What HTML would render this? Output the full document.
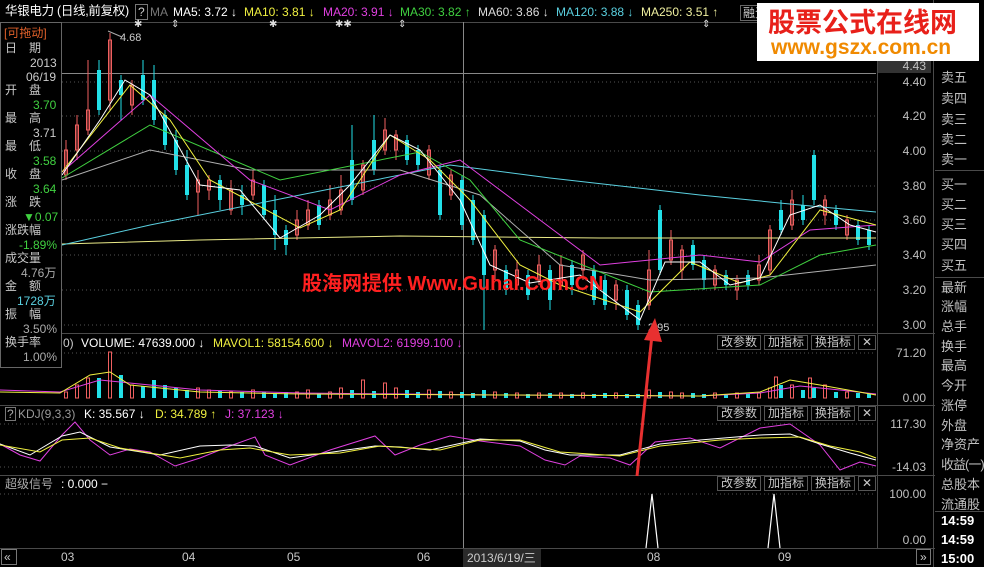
<!DOCTYPE html>
<html><head><meta charset="utf-8"><style>
*{margin:0;padding:0;box-sizing:border-box}
body{width:984px;height:567px;background:#000;overflow:hidden;position:relative;font-family:"Liberation Sans","Noto Sans CJK SC",sans-serif;font-size:12px;color:#c8c8c8}
.a{position:absolute;white-space:nowrap;line-height:14px}
.btn{position:absolute;border:1px solid #555;color:#c8c8c8;font-size:12px;line-height:13px;padding:0 3px;height:15px}
.rp{position:absolute;left:941px;color:#c0c0c0;font-size:13px;line-height:15px;white-space:nowrap}
.ax{position:absolute;right:58px;color:#c0c0c0;font-size:12px;line-height:12px;text-align:right}
</style></head><body>
<svg width="984" height="567" style="position:absolute;left:0;top:0">
<g stroke="#555" stroke-dasharray="1,3" stroke-width="1">
<line x1="62" y1="82" x2="876" y2="82"/><line x1="62" y1="116" x2="876" y2="116"/><line x1="62" y1="151" x2="876" y2="151"/><line x1="62" y1="186" x2="876" y2="186"/><line x1="62" y1="220" x2="876" y2="220"/><line x1="62" y1="255" x2="876" y2="255"/><line x1="62" y1="290" x2="876" y2="290"/><line x1="0" y1="325" x2="876" y2="325"/>
<line x1="0" y1="353" x2="876" y2="353"/><line x1="0" y1="424" x2="876" y2="424"/><line x1="0" y1="467" x2="876" y2="467"/><line x1="0" y1="494" x2="876" y2="494"/>
</g>
<g stroke="#4a4a4a" stroke-width="1">
<line x1="0" y1="22.5" x2="935" y2="22.5"/>
<line x1="0" y1="333.5" x2="935" y2="333.5"/><line x1="0" y1="405.5" x2="935" y2="405.5"/><line x1="0" y1="475.5" x2="935" y2="475.5"/><line x1="0" y1="548.5" x2="935" y2="548.5"/>
<line x1="877.5" y1="22" x2="877.5" y2="548"/><line x1="933.5" y1="0" x2="933.5" y2="567"/>
<line x1="935" y1="170.5" x2="984" y2="170.5"/><line x1="935" y1="277.5" x2="984" y2="277.5"/><line x1="935" y1="511.5" x2="984" y2="511.5"/>
</g>
<line x1="463.5" y1="22" x2="463.5" y2="548" stroke="#888"/>
<line x1="62" y1="73.5" x2="876" y2="73.5" stroke="#888"/>
<rect x="878" y="60" width="53" height="13" fill="#333"/>
<g stroke="#f06060" stroke-width="1">
<path d="M66 140V180M77 115V160M88 60V135M110 33V110M132 80V115M198 170V215M209 175V200M231 180V215M253 170V200M297 210V240M308 200V230M330 185V220M341 175V215M363 160V195M385 118V155M396 130V160M429 145V180M451 170V200M495 245V280M517 260V290M539 255V285M561 255V290M583 250V280M616 280V310M649 250V310M671 230V265M682 245V280M715 265V290M737 275V300M759 255V285M770 225V275M792 190V230M825 195V225M847 215V240"/>
</g>
<g fill="none" stroke="#f06060" stroke-width="1">
<path d="M64.5 150h3v25h-3zM75.5 125h3v25h-3zM86.5 110h3v20h-3zM108.5 40h3v60h-3zM130.5 85h3v20h-3zM196.5 180h3v12h-3zM207.5 180h3v10h-3zM229.5 190h3v20h-3zM251.5 180h3v15h-3zM295.5 220h3v15h-3zM306.5 210h3v15h-3zM328.5 200h3v15h-3zM339.5 190h3v20h-3zM361.5 165h3v25h-3zM383.5 130h3v20h-3zM394.5 135h3v15h-3zM427.5 150h3v25h-3zM449.5 175h3v20h-3zM493.5 250h3v20h-3zM515.5 270h3v15h-3zM537.5 265h3v15h-3zM559.5 265h3v20h-3zM581.5 255h3v15h-3zM614.5 285h3v15h-3zM647.5 270h3v35h-3zM669.5 240h3v20h-3zM680.5 250h3v20h-3zM713.5 270h3v15h-3zM735.5 280h3v10h-3zM757.5 265h3v15h-3zM768.5 230h3v40h-3zM790.5 200h3v25h-3zM823.5 200h3v15h-3zM845.5 220h3v15h-3z"/>
</g>
<g stroke="#22e0e8" stroke-width="1">
<path d="M99 60V115M121 75V120M143 60V105M154 65V125M165 110V150M176 130V175M187 150V200M220 175V210M242 185V215M264 180V220M275 195V250M286 225V255M319 200V230M352 125V205M374 115V175M407 135V165M418 145V170M440 165V220M462 175V230M473 195V245M484 210V330M506 265V295M528 270V300M550 265V310M572 260V295M594 265V305M605 275V310M627 285V320M638 300V330M660 205V275M693 240V270M704 255V290M726 270V290M748 270V290M781 200V235M803 195V225M814 150V205M836 205V230M858 220V245M869 225V250"/>
</g>
<g stroke="#22e0e8" stroke-width="4">
<path d="M99 70V110M121 80V95M143 75V100M154 80V120M165 115V145M176 140V170M187 165V195M220 180V200M242 195V205M264 185V215M275 210V235M286 230V245M319 205V225M352 160V200M374 140V170M407 140V160M418 150V165M440 170V215M462 180V225M473 200V240M484 215V275M506 270V290M528 275V295M550 270V300M572 265V285M594 270V300M605 280V305M627 290V315M638 305V325M660 210V270M693 245V265M704 260V280M726 275V285M748 275V285M781 210V230M803 205V220M814 155V200M836 210V225M858 225V240M869 230V245"/>
</g>
<g fill="none" stroke-width="1">
<polyline stroke="#eaea88" points="62,244 200,240 400,236 600,238 700,238 876,238"/>
<polyline stroke="#5ad0e0" points="62,245 150,225 300,195 450,165 550,178 700,195 800,205 876,212"/>
<polyline stroke="#b0b0b0" points="62,180 150,150 250,170 400,170 480,195 560,265 650,280 760,278 876,265"/>
<polyline stroke="#40d040" points="62,178 150,125 280,180 420,152 470,180 520,240 650,292 760,285 820,255 876,245"/>
<polyline stroke="#e040e0" points="62,172 150,95 250,180 330,210 400,175 460,160 540,220 600,265 700,255 760,262 810,230 876,225"/>
<polyline stroke="#f0f040" points="62,172 130,85 170,120 210,180 300,228 340,210 390,135 430,160 470,200 520,265 560,285 640,312 690,262 740,283 770,275 820,210 876,225"/>
<polyline stroke="#ffffff" points="62,175 100,120 125,80 150,95 175,140 200,185 240,190 280,238 320,215 350,185 390,135 420,150 460,200 490,265 530,283 580,275 640,320 665,262 700,262 730,285 760,278 790,215 820,205 850,225 876,232"/>
</g>
<polyline fill="none" stroke="#aaa" points="122,37 108,31"/><text x="120" y="41" fill="#ccc" font-size="11" font-family="Liberation Sans">4.68</text>
<text x="648" y="331" fill="#ccc" font-size="11" font-family="Liberation Sans">2.95</text>
<g stroke="#f06060" stroke-width="1" fill="none">
<path d="M64.5 392h3v6h-3zM75.5 385h3v13h-3zM86.5 378h3v20h-3zM108.5 352h3v46h-3zM130.5 385h3v13h-3zM196.5 388h3v10h-3zM207.5 390h3v8h-3zM229.5 392h3v6h-3zM251.5 390h3v8h-3zM295.5 392h3v6h-3zM306.5 390h3v8h-3zM328.5 392h3v6h-3zM339.5 388h3v10h-3zM361.5 380h3v18h-3zM383.5 383h3v15h-3zM394.5 388h3v10h-3zM427.5 390h3v8h-3zM449.5 392h3v6h-3zM493.5 392h3v6h-3zM515.5 393h3v5h-3zM537.5 393h3v5h-3zM559.5 393h3v5h-3zM581.5 393h3v5h-3zM614.5 393h3v5h-3zM647.5 390h3v8h-3zM669.5 392h3v6h-3zM680.5 393h3v5h-3zM713.5 393h3v5h-3zM735.5 393h3v5h-3zM757.5 393h3v5h-3zM768.5 388h3v10h-3zM774.5 377h3v21h-3zM790.5 385h3v13h-3zM808.5 378h3v20h-3zM823.5 385h3v13h-3zM845.5 392h3v6h-3z"/>
</g>
<g stroke="#22e0e8" stroke-width="4">
<path d="M99 378V398M121 375V398M143 386V398M154 380V398M165 385V398M176 388V398M187 390V398M220 391V398M242 392V398M264 392V398M275 393V398M286 392V398M319 393V398M352 390V398M374 391V398M407 390V398M418 392V398M440 391V398M462 392V398M473 393V398M484 390V398M506 393V398M528 394V398M550 393V398M572 394V398M594 394V398M605 393V398M627 394V398M638 394V398M660 392V398M693 393V398M704 394V398M726 394V398M748 394V398M781 385V398M803 390V398M814 388V398M836 392V398M858 393V398M869 394V398"/>
</g>
<g fill="none" stroke-width="1">
<polyline stroke="#e040e0" points="0,390 60,392 100,380 150,385 200,390 300,393 500,395 700,396 760,393 800,386 840,390 876,394"/>
<polyline stroke="#f0f040" points="0,392 60,393 90,375 110,372 130,385 200,392 300,394 500,395 700,396 760,392 790,380 820,385 876,395"/>
</g>
<g fill="none" stroke-width="1">
<polyline stroke="#e040e0" points="0,444 20,455 40,461 62,435 75,422 90,440 110,455 130,449 150,452 175,466 200,458 230,446 255,437 265,455 290,465 330,450 375,436 395,455 420,445 450,436 480,441 520,446 545,460 565,465 580,456 610,458 630,465 655,442 690,438 720,448 760,428 790,424 820,445 840,470 860,462 876,466"/>
<polyline stroke="#ffffff" points="0,444 30,455 62,436 80,432 110,447 160,455 200,446 230,445 255,446 290,458 340,451 375,446 400,447 430,450 480,439 520,441 545,450 570,455 620,455 660,444 700,440 760,435 790,434 820,444 850,453 876,460"/>
<polyline stroke="#f0f040" points="0,445 40,452 62,440 90,438 120,448 180,458 220,450 250,448 290,455 340,453 380,446 440,450 480,440 520,440 560,452 620,456 660,446 720,440 760,438 800,437 830,446 860,452 876,458"/>
</g>
<g fill="none" stroke="#fff" stroke-width="1.2"><polyline points="646,548 652,494 658,548"/><polyline points="768,548 774,494 780,548"/></g>
<line x1="637" y1="476" x2="652" y2="335" stroke="#e83030" stroke-width="3"/>
<polygon points="655,318 644,340 662,342" fill="#e83030"/>
<rect x="0.5" y="22.5" width="61" height="345" fill="#000" stroke="#666"/>
<rect x="5.5" y="407.5" width="10" height="13" fill="none" stroke="#777"/>
<rect x="135.5" y="4.5" width="12" height="15" fill="none" stroke="#777"/>
<rect x="1.5" y="549.5" width="15" height="15" fill="none" stroke="#777"/>
<rect x="916.5" y="549.5" width="14" height="15" fill="none" stroke="#777"/>
<rect x="463" y="549" width="78" height="18" fill="#2a2a2a"/>
</svg>
<div class="a" style="left:5px;top:4px;color:#fff;font-size:12.5px;letter-spacing:-0.3px">华银电力 (日线,前复权)</div>
<div class="a" style="left:138px;top:5px;color:#ccc">?</div>
<div class="a" style="left:150px;top:5px;color:#777">MA</div>
<div class="a" style="left:173px;top:5px;color:#fff">MA5: 3.72 ↓</div>
<div class="a" style="left:244px;top:5px;color:#f0f040">MA10: 3.81 ↓</div>
<div class="a" style="left:323px;top:5px;color:#e040e0">MA20: 3.91 ↓</div>
<div class="a" style="left:400px;top:5px;color:#40d040">MA30: 3.82 ↑</div>
<div class="a" style="left:478px;top:5px;color:#ddd">MA60: 3.86 ↓</div>
<div class="a" style="left:556px;top:5px;color:#5ad0e0">MA120: 3.88 ↓</div>
<div class="a" style="left:641px;top:5px;color:#f0f0a0">MA250: 3.51 ↑</div>
<div class="a" style="left:740px;top:5px;color:#ccc;border:1px solid #666;padding:0 2px">融资</div>
<div class="a" style="left:134px;top:18px;color:#ddd;font-size:10px">✱</div>
<div class="a" style="left:171px;top:18px;color:#ddd;font-size:10px">⇕</div>
<div class="a" style="left:269px;top:18px;color:#ddd;font-size:10px">✱</div>
<div class="a" style="left:335px;top:18px;color:#ddd;font-size:10px">✱✱</div>
<div class="a" style="left:398px;top:18px;color:#ddd;font-size:10px">⇕</div>
<div class="a" style="left:702px;top:18px;color:#ddd;font-size:10px">⇕</div>
<div style="position:absolute;left:757px;top:3px;width:222px;height:58px;background:#fff"></div>
<div class="a" style="left:768px;top:5px;color:#e8201a;font-size:27px;line-height:32px;font-weight:bold;font-family:'Noto Sans CJK SC',sans-serif">股票公式在线网</div>
<div class="a" style="left:771px;top:37px;color:#f08a00;font-size:21px;line-height:22px;font-weight:bold">www.gszx.com.cn</div>
<div class="a" style="left:302px;top:272px;color:#ff2020;font-size:20px;line-height:24px;font-weight:bold">股海网提供 Www.Guhai.Com.CN</div>
<div class="a" style="left:4px;top:26px;color:#e0602a">[可拖动]</div>
<div class="a" style="left:5px;top:41px">日　期</div>
<div class="a" style="left:30px;top:56px;color:#ccc">2013</div>
<div class="a" style="left:26px;top:70px;color:#ccc">06/19</div>
<div class="a" style="left:5px;top:83px">开　盘</div>
<div class="a" style="left:33px;top:98px;color:#40d040">3.70</div>
<div class="a" style="left:5px;top:111px">最　高</div>
<div class="a" style="left:33px;top:126px;color:#ccc">3.71</div>
<div class="a" style="left:5px;top:139px">最　低</div>
<div class="a" style="left:33px;top:154px;color:#40d040">3.58</div>
<div class="a" style="left:5px;top:167px">收　盘</div>
<div class="a" style="left:33px;top:182px;color:#40d040">3.64</div>
<div class="a" style="left:5px;top:195px">涨　跌</div>
<div class="a" style="left:23px;top:210px;color:#40d040">▼0.07</div>
<div class="a" style="left:5px;top:223px">涨跌幅</div>
<div class="a" style="left:19px;top:238px;color:#40d040">-1.89%</div>
<div class="a" style="left:5px;top:251px">成交量</div>
<div class="a" style="left:21px;top:266px;color:#aaa">4.76万</div>
<div class="a" style="left:5px;top:279px">金　额</div>
<div class="a" style="left:17px;top:294px;color:#5ad0e0">1728万</div>
<div class="a" style="left:5px;top:307px">振　幅</div>
<div class="a" style="left:23px;top:322px;color:#aaa">3.50%</div>
<div class="a" style="left:5px;top:335px">换手率</div>
<div class="a" style="left:23px;top:350px;color:#aaa">1.00%</div>
<div class="a" style="left:63px;top:336px;color:#ccc">0)</div>
<div class="a" style="left:81px;top:336px;color:#fff">VOLUME: 47639.000 ↓</div>
<div class="a" style="left:213px;top:336px;color:#f0f040">MAVOL1: 58154.600 ↓</div>
<div class="a" style="left:342px;top:336px;color:#e040e0">MAVOL2: 61999.100 ↓</div>
<div class="a" style="left:7px;top:407px;color:#aaa">?</div>
<div class="a" style="left:18px;top:407px;color:#999">KDJ(9,3,3)</div>
<div class="a" style="left:84px;top:407px;color:#fff">K: 35.567 ↓</div>
<div class="a" style="left:155px;top:407px;color:#f0f040">D: 34.789 ↑</div>
<div class="a" style="left:225px;top:407px;color:#e040e0">J: 37.123 ↓</div>
<div class="a" style="left:5px;top:477px;color:#aaa">超级信号</div>
<div class="a" style="left:61px;top:477px;color:#fff">: 0.000 −</div>
<div class="btn" style="left:717px;top:335px">改参数</div><div class="btn" style="left:764px;top:335px">加指标</div><div class="btn" style="left:811px;top:335px">换指标</div><div class="btn" style="left:858px;top:335px">✕</div>
<div class="btn" style="left:717px;top:406px">改参数</div><div class="btn" style="left:764px;top:406px">加指标</div><div class="btn" style="left:811px;top:406px">换指标</div><div class="btn" style="left:858px;top:406px">✕</div>
<div class="btn" style="left:717px;top:476px">改参数</div><div class="btn" style="left:764px;top:476px">加指标</div><div class="btn" style="left:811px;top:476px">换指标</div><div class="btn" style="left:858px;top:476px">✕</div>
<div class="ax" style="top:60px">4.43</div>
<div class="ax" style="top:76px">4.40</div><div class="ax" style="top:110px">4.20</div><div class="ax" style="top:145px">4.00</div><div class="ax" style="top:180px">3.80</div><div class="ax" style="top:214px">3.60</div><div class="ax" style="top:249px">3.40</div><div class="ax" style="top:284px">3.20</div><div class="ax" style="top:319px">3.00</div>
<div class="ax" style="top:347px">71.20</div><div class="ax" style="top:392px">0.00</div>
<div class="ax" style="top:418px">117.30</div><div class="ax" style="top:461px">-14.03</div>
<div class="ax" style="top:488px">100.00</div><div class="ax" style="top:534px">0.00</div>
<div class="a" style="left:4px;top:550px;color:#ccc">«</div>
<div class="a" style="left:920px;top:550px;color:#ccc">»</div>
<div class="a" style="left:61px;top:550px">03</div><div class="a" style="left:182px;top:550px">04</div><div class="a" style="left:287px;top:550px">05</div><div class="a" style="left:417px;top:550px">06</div>
<div class="a" style="left:467px;top:551px;color:#ccc">2013/6/19/三</div>
<div class="a" style="left:647px;top:550px">08</div><div class="a" style="left:778px;top:550px">09</div>
<div class="rp" style="top:70px">卖五</div><div class="rp" style="top:91px">卖四</div><div class="rp" style="top:112px">卖三</div><div class="rp" style="top:132px">卖二</div><div class="rp" style="top:152px">卖一</div>
<div class="rp" style="top:177px">买一</div><div class="rp" style="top:197px">买二</div><div class="rp" style="top:217px">买三</div><div class="rp" style="top:237px">买四</div><div class="rp" style="top:258px">买五</div>
<div class="rp" style="top:280px">最新</div><div class="rp" style="top:299px">涨幅</div><div class="rp" style="top:319px">总手</div><div class="rp" style="top:339px">换手</div><div class="rp" style="top:358px">最高</div><div class="rp" style="top:378px">今开</div><div class="rp" style="top:398px">涨停</div><div class="rp" style="top:418px">外盘</div><div class="rp" style="top:437px">净资产</div><div class="rp" style="top:457px;letter-spacing:-1px">收益(一)</div><div class="rp" style="top:477px">总股本</div><div class="rp" style="top:497px">流通股</div>
<div class="rp" style="top:513px;color:#fff;font-weight:bold">14:59</div><div class="rp" style="top:532px;color:#fff;font-weight:bold">14:59</div><div class="rp" style="top:551px;color:#fff;font-weight:bold">15:00</div>
</body></html>
